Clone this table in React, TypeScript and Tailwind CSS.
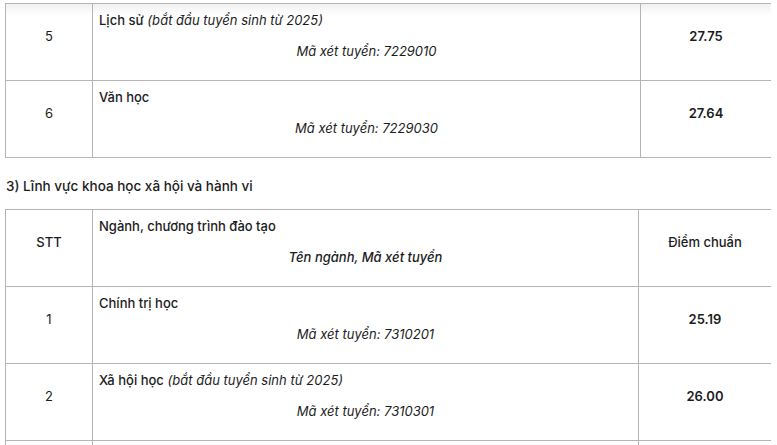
import React from "react";

type Row = {
  stt: string;
  name: React.ReactNode;
  sub: React.ReactNode;
  score: string;
  header?: boolean;
};

function TableRow({ r, mid, last }: { r: Row; mid: string; last: string }) {
  const grid = mid === "548" ? "grid-cols-[87px_548px_130px]" : "grid-cols-[87px_546px_132px]";
  return (
    <div className={`grid ${grid} h-[77px] border-b border-[#b4b4b4]`}>
      <div
        className={`border-r border-[#b4b4b4] flex items-center justify-center pt-[6px] pb-[17px] ${
          r.header ? "font-medium" : "font-normal"
        }`}
      >
        {r.stt}
      </div>
      <div className="border-r border-[#b4b4b4] flex flex-col pt-[6px] pl-[6px] pr-[6px]">
        <div className="leading-[20px] h-[20px] whitespace-nowrap">{r.name}</div>
        <div className="leading-[20px] h-[20px] mt-[11px] text-center italic whitespace-nowrap">{r.sub}</div>
      </div>
      <div
        className={`flex items-center justify-center pt-[6px] pb-[17px] ${
          r.header ? "font-medium" : "font-semibold"
        }`}
      >
        {r.score}
      </div>
    </div>
  );
}

export default function App() {
  const font = { fontFamily: "Inter, 'Noto Sans', sans-serif" };
  const rows1: Row[] = [
    {
      stt: "5",
      name: (
        <>
          <span className="font-medium">Lịch sử</span>{" "}
          <span className="italic">(bắt đầu tuyển sinh từ 2025)</span>
        </>
      ),
      sub: "Mã xét tuyển: 7229010",
      score: "27.75",
    },
    {
      stt: "6",
      name: <span className="font-medium">Văn học</span>,
      sub: "Mã xét tuyển: 7229030",
      score: "27.64",
    },
  ];
  const rows2: Row[] = [
    {
      stt: "STT",
      name: <span className="font-medium">Ngành, chương trình đào tạo</span>,
      sub: <span className="font-medium">Tên ngành, Mã xét tuyển</span>,
      score: "Điểm chuẩn",
      header: true,
    },
    {
      stt: "1",
      name: <span className="font-medium">Chính trị học</span>,
      sub: "Mã xét tuyển: 7310201",
      score: "25.19",
    },
    {
      stt: "2",
      name: (
        <>
          <span className="font-medium">Xã hội học</span>{" "}
          <span className="italic">(bắt đầu tuyển sinh từ 2025)</span>
        </>
      ),
      sub: "Mã xét tuyển: 7310301",
      score: "26.00",
    },
    {
      stt: "",
      name: "",
      sub: "",
      score: "",
    },
  ];
  return (
    <div
      className="w-[777px] h-[445px] overflow-hidden bg-white text-[13px] text-[#1c1c1c] pt-[3px] pl-[5px]"
      style={font}
    >
      <div className="w-[766px] border-l border-t border-[#b4b4b4] bg-gradient-to-b from-[#f1f1f1] via-white via-[12px] to-white">
        {rows1.map((r, i) => (
          <TableRow key={i} r={r} mid="548" last="130" />
        ))}
      </div>
      <div className="h-[51px] flex items-center pl-[1px] pt-[6px] text-[13.5px] font-medium">
        3) Lĩnh vực khoa học xã hội và hành vi
      </div>
      <div className="w-[766px] border-l border-t border-[#b4b4b4]">
        {rows2.map((r, i) => (
          <TableRow key={i} r={r} mid="546" last="132" />
        ))}
      </div>
    </div>
  );
}
